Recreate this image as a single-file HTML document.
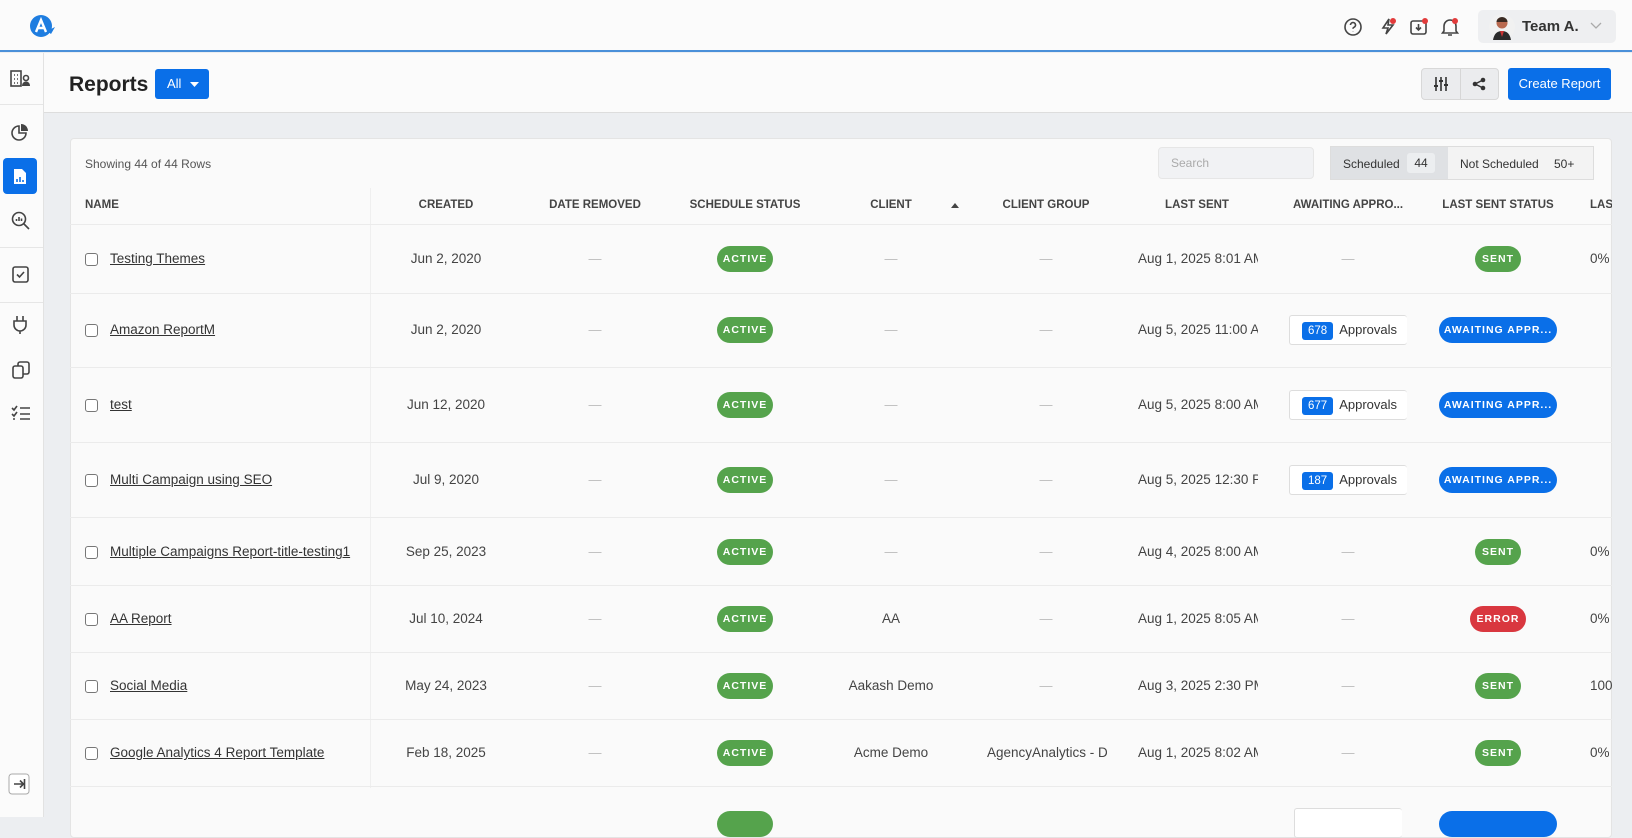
<!DOCTYPE html>
<html><head><meta charset="utf-8">
<style>
*{box-sizing:border-box;margin:0;padding:0}
body{width:1632px;height:817px;overflow:hidden;background:#eceef1;font-family:"Liberation Sans",Arial,sans-serif;color:#333;position:relative}
.a{position:absolute}
.top{left:0;top:0;width:1632px;height:52px;background:#fbfbfb;border-bottom:2px solid #4a90d9}
.side{left:0;top:53px;width:44px;height:764px;background:#fbfbfb;border-right:1px solid #e2e2e2}
.ph{left:44px;top:53px;width:1588px;height:60px;background:#fbfbfb;border-bottom:1px solid #ddd}
.card{left:70px;top:138px;width:1542px;height:700px;background:#fafafa;border:1px solid #e4e4e4;border-radius:4px;overflow:hidden}
.hd{font-size:11.5px;font-weight:bold;color:#444;top:199px;white-space:nowrap}
.c{transform:translateX(-50%);white-space:nowrap}
.t{font-size:13.5px;color:#444;white-space:nowrap}
.pill{height:26px;border-radius:13px;color:#fff;font-size:10.5px;font-weight:bold;letter-spacing:1px;text-align:center;line-height:26px}
.g{background:#55a34c}
.r{background:#d9373f}
.b{background:#0a6fe8}
.dash{color:#bbb;font-size:13px}
.line{left:70px;width:1542px;height:1px;background:#ebebeb}
.cb{width:13px;height:13px;border:1px solid #777;border-radius:3px;background:#fff}
.nm{font-size:13.5px;color:#333;text-decoration:underline}
.ic{stroke:#444;fill:none;stroke-width:1.6}
.ap{width:118px;height:30px;border:1px solid #ddd;border-right:none;border-radius:3px;background:#fff;font-size:13px;color:#333;line-height:28px;padding-left:12px}
.ap span{display:inline-block;background:#0a6fe8;color:#fff;font-size:11.5px;padding:0 6px;line-height:18px;border-radius:3px;margin-right:6px}
</style></head><body>
<div class="a top"></div>
<!-- logo -->
<svg class="a" style="left:29px;top:13px" width="28" height="26" viewBox="0 0 28 26"><circle cx="12" cy="13" r="11" fill="#1e7de0"/><path d="M7 19 L12 7 L17 19 M9 15 H15" stroke="#fff" stroke-width="2.4" fill="none"/><path d="M18 18 L26 14 L22 21 Z" fill="#1e7de0"/></svg>
<!-- top icons -->
<svg class="a" style="left:1343px;top:17px" width="20" height="20" viewBox="0 0 20 20"><circle cx="10" cy="10" r="8" class="ic"/><path d="M7.5 8a2.5 2.5 0 1 1 3.5 2.3c-.7.3-1 .8-1 1.5M10 14.5v.3" class="ic"/></svg>
<svg class="a" style="left:1378px;top:16px" width="20" height="20" viewBox="0 0 20 20"><path d="M11 3 L5 12 H10 L8 18 L15 9 H10 Z" class="ic"/><circle cx="15" cy="5" r="3" fill="#e23b3b"/></svg>
<svg class="a" style="left:1408px;top:16px" width="22" height="22" viewBox="0 0 22 22"><rect x="3" y="5" width="15" height="13" rx="2" class="ic"/><path d="M10.5 8v6M8 11.5l2.5 2.5 2.5-2.5" class="ic"/><circle cx="17" cy="5" r="3" fill="#e23b3b"/></svg>
<svg class="a" style="left:1440px;top:16px" width="20" height="22" viewBox="0 0 20 22"><path d="M4 15V10a6 6 0 0 1 12 0v5l1.5 2h-15z M8 19h4" class="ic"/><circle cx="15" cy="5" r="3" fill="#e23b3b"/></svg>
<div class="a" style="left:1478px;top:10px;width:138px;height:33px;background:#eeeff1;border-radius:5px"></div>
<svg class="a" style="left:1489px;top:13px" width="26" height="28" viewBox="0 0 26 28"><circle cx="13" cy="14" r="13" fill="#f1f1f1"/><circle cx="13" cy="10" r="5.5" fill="#b8694f"/><path d="M7.5 9a5.5 5 0 0 1 11 0z" fill="#3a2a22"/><path d="M4 27c1-6 4-9 9-9s8 3 9 9z" fill="#2b2b2b"/><path d="M11 18l2 6 2-6z" fill="#c33"/></svg>
<div class="a" style="left:1522px;top:18px;font-size:15px;font-weight:bold;color:#333">Team A.</div>
<svg class="a" style="left:1590px;top:22px" width="12" height="8" viewBox="0 0 12 8"><path d="M1 1l5 5 5-5" stroke="#aaa" fill="none" stroke-width="1.3"/></svg>

<div class="a side"></div>
<div class="a" style="left:0;top:104px;width:43px;height:1px;background:#e6e6e6"></div>
<div class="a" style="left:0;top:247px;width:43px;height:1px;background:#e6e6e6"></div>
<div class="a" style="left:0;top:302px;width:43px;height:1px;background:#e6e6e6"></div>
<svg class="a" style="left:10px;top:70px" width="22" height="18" viewBox="0 0 22 18"><rect x="1" y="1" width="10" height="15" class="ic"/><path d="M4 5h1M7 5h1M4 9h1M7 9h1M4 13h1M7 13h1" class="ic"/><circle cx="16" cy="8" r="2.5" class="ic"/><path d="M12 16c0-3 2-4.5 4-4.5s4 1.5 4 4.5z" fill="#444"/></svg>
<svg class="a" style="left:11px;top:123px" width="18" height="18" viewBox="0 0 18 18"><path d="M8 3a7 7 0 1 0 7 7H8z" class="ic"/><path d="M10 1v7h7a7 7 0 0 0-7-7z" fill="#444"/></svg>
<div class="a" style="left:3px;top:158px;width:34px;height:36px;background:#0a6fe8;border-radius:4px"></div>
<svg class="a" style="left:13px;top:168px" width="14" height="17" viewBox="0 0 14 17"><path d="M1 1h8l4 4v11H1z" fill="#fff"/><path d="M4 14v-3M7 14V9M10 14v-2" stroke="#0a6fe8" stroke-width="1.6"/></svg>
<svg class="a" style="left:11px;top:211px" width="20" height="20" viewBox="0 0 20 20"><circle cx="8" cy="8" r="6.5" class="ic"/><path d="M13 13l5 5" class="ic" stroke-width="2"/><path d="M5.5 10V8M8 10V6M10.5 10V7.5" class="ic"/></svg>
<svg class="a" style="left:12px;top:266px" width="17" height="17" viewBox="0 0 17 17"><rect x="1" y="1" width="15" height="15" rx="2" class="ic"/><path d="M5 8.5l2.5 2.5 4.5-5" class="ic"/></svg>
<svg class="a" style="left:12px;top:315px" width="16" height="20" viewBox="0 0 16 20"><path d="M5 1v5M11 1v5M2 6h12v4a6 6 0 0 1-12 0zM8 16v3" class="ic"/></svg>
<svg class="a" style="left:12px;top:361px" width="18" height="18" viewBox="0 0 18 18"><rect x="1" y="5" width="10" height="12" rx="2" class="ic"/><path d="M6 5V3a2 2 0 0 1 2-2h7a2 2 0 0 1 2 2v8a2 2 0 0 1-2 2h-4" class="ic"/></svg>
<svg class="a" style="left:11px;top:405px" width="20" height="16" viewBox="0 0 20 16"><path d="M1 3l2 2 3-4M1 9l2 2 3-4M2 14h2M9 3h10M9 9h10M9 14h10" class="ic"/></svg>
<svg class="a" style="left:8px;top:773px" width="22" height="22" viewBox="0 0 22 22"><rect x="1" y="1" width="20" height="20" rx="3" stroke="#aaa" fill="#fff"/><path d="M6 11h9M12 7.5l3.5 3.5-3.5 3.5M16.5 6v10" class="ic" stroke-width="1.4"/></svg>

<div class="a ph"></div>
<div class="a" style="left:69px;top:73px;font-size:21px;font-weight:bold;color:#222">Reports</div>
<div class="a" style="left:155px;top:69px;width:54px;height:30px;background:#0a6fe8;border-radius:3px;color:#fff;font-size:13px;line-height:30px;padding-left:12px">All<svg style="position:absolute;left:35px;top:13px" width="9" height="5" viewBox="0 0 9 5"><path d="M0 0h9L4.5 5z" fill="#fff"/></svg></div>
<div class="a" style="left:1421px;top:68px;width:78px;height:32px;background:#ebecee;border:1px solid #d8d8d8;border-radius:4px"></div>
<div class="a" style="left:1460px;top:69px;width:1px;height:30px;background:#d6d6d6"></div>
<svg class="a" style="left:1433px;top:76px" width="16" height="16" viewBox="0 0 16 16"><path d="M3 1v14M8 1v14M13 1v14" stroke="#333" stroke-width="1.6"/><path d="M1 10h4M6 5h4M11 9h4" stroke="#333" stroke-width="2"/></svg>
<svg class="a" style="left:1472px;top:77px" width="14" height="14" viewBox="0 0 14 14"><circle cx="3" cy="7" r="2.3" fill="#333"/><circle cx="11" cy="3" r="2.3" fill="#333"/><circle cx="11" cy="11" r="2.3" fill="#333"/><path d="M3 7l8-4M3 7l8 4" stroke="#333" stroke-width="1.4"/></svg>
<div class="a" style="left:1508px;top:68px;width:103px;height:32px;background:#0a6fe8;border-radius:3px;color:#fff;font-size:13px;line-height:32px;text-align:center">Create Report</div>

<div class="a card"></div>
<div class="a" style="left:85px;top:157px;font-size:12px;color:#555">Showing 44 of 44 Rows</div>
<div class="a" style="left:1158px;top:147px;width:156px;height:32px;background:#f1f2f4;border:1px solid #e6e6e6;border-radius:4px;font-size:12px;color:#aaa;line-height:30px;padding-left:12px">Search</div>
<div class="a" style="left:1330px;top:146px;width:264px;height:34px;background:#f3f3f3;border:1px solid #ddd"></div>
<div class="a" style="left:1331px;top:147px;width:117px;height:32px;background:#dfe1e4"></div>
<div class="a" style="left:1343px;top:157px;font-size:12px;color:#333">Scheduled</div>
<div class="a" style="left:1407px;top:153px;width:28px;height:20px;background:#eceef0;border-radius:3px;font-size:12px;line-height:20px;text-align:center">44</div>
<div class="a" style="left:1460px;top:157px;font-size:12px;color:#333">Not Scheduled</div>
<div class="a" style="left:1554px;top:157px;font-size:12px;color:#333">50+</div>

<div class="a" style="left:370px;top:188px;width:1px;height:600px;background:#efefef"></div>
<div class="a hd" style="left:85px">NAME</div>
<div class="a hd c" style="left:446px">CREATED</div>
<div class="a hd c" style="left:595px">DATE REMOVED</div>
<div class="a hd c" style="left:745px">SCHEDULE STATUS</div>
<div class="a hd c" style="left:891px">CLIENT</div>
<svg class="a" style="left:951px;top:203px" width="8" height="5" viewBox="0 0 8 5"><path d="M0 5h8L4 0z" fill="#444"/></svg>
<div class="a hd c" style="left:1046px">CLIENT GROUP</div>
<div class="a hd c" style="left:1197px">LAST SENT</div>
<div class="a hd c" style="left:1348px">AWAITING APPRO...</div>
<div class="a hd c" style="left:1498px">LAST SENT STATUS</div>
<div class="a hd" style="left:1590px;width:22px;overflow:hidden">LAST</div>

<div class="a line" style="top:224px"></div>
<div class="a line" style="top:293px"></div>
<div class="a line" style="top:367px"></div>
<div class="a line" style="top:442px"></div>
<div class="a line" style="top:517px"></div>
<div class="a line" style="top:585px"></div>
<div class="a line" style="top:652px"></div>
<div class="a line" style="top:719px"></div>
<div class="a line" style="top:786px"></div>

<!-- rows -->
<div id="rows"></div>
<div class="a cb" style="left:85px;top:253px"></div><div class="a nm" style="left:110px;top:251px">Testing Themes</div>
<div class="a t c" style="left:446px;top:251px">Jun 2, 2020</div>
<div class="a dash c" style="left:595px;top:251px">—</div>
<div class="a pill g" style="left:717px;top:246px;width:56px">ACTIVE</div>
<div class="a dash c" style="left:891px;top:251px">—</div>
<div class="a dash c" style="left:1046px;top:251px">—</div>
<div class="a t" style="left:1138px;top:251px;width:120px;overflow:hidden">Aug 1, 2025 8:01 AM</div>
<div class="a dash c" style="left:1348px;top:251px">—</div>
<div class="a pill g" style="left:1475px;top:246px;width:46px">SENT</div>
<div class="a t" style="left:1590px;top:251px;width:22px;overflow:hidden">0%</div>

<div class="a cb" style="left:85px;top:324px"></div><div class="a nm" style="left:110px;top:322px">Amazon ReportM</div>
<div class="a t c" style="left:446px;top:322px">Jun 2, 2020</div>
<div class="a dash c" style="left:595px;top:322px">—</div>
<div class="a pill g" style="left:717px;top:317px;width:56px">ACTIVE</div>
<div class="a dash c" style="left:891px;top:322px">—</div>
<div class="a dash c" style="left:1046px;top:322px">—</div>
<div class="a t" style="left:1138px;top:322px;width:120px;overflow:hidden">Aug 5, 2025 11:00 AM</div>
<div class="a ap" style="left:1289px;top:315px"><span>678</span>Approvals</div>
<div class="a pill b" style="left:1439px;top:317px;width:118px">AWAITING APPR...</div>

<div class="a cb" style="left:85px;top:399px"></div><div class="a nm" style="left:110px;top:397px">test</div>
<div class="a t c" style="left:446px;top:397px">Jun 12, 2020</div>
<div class="a dash c" style="left:595px;top:397px">—</div>
<div class="a pill g" style="left:717px;top:392px;width:56px">ACTIVE</div>
<div class="a dash c" style="left:891px;top:397px">—</div>
<div class="a dash c" style="left:1046px;top:397px">—</div>
<div class="a t" style="left:1138px;top:397px;width:120px;overflow:hidden">Aug 5, 2025 8:00 AM</div>
<div class="a ap" style="left:1289px;top:390px"><span>677</span>Approvals</div>
<div class="a pill b" style="left:1439px;top:392px;width:118px">AWAITING APPR...</div>

<div class="a cb" style="left:85px;top:474px"></div><div class="a nm" style="left:110px;top:472px">Multi Campaign using SEO</div>
<div class="a t c" style="left:446px;top:472px">Jul 9, 2020</div>
<div class="a dash c" style="left:595px;top:472px">—</div>
<div class="a pill g" style="left:717px;top:467px;width:56px">ACTIVE</div>
<div class="a dash c" style="left:891px;top:472px">—</div>
<div class="a dash c" style="left:1046px;top:472px">—</div>
<div class="a t" style="left:1138px;top:472px;width:120px;overflow:hidden">Aug 5, 2025 12:30 PM</div>
<div class="a ap" style="left:1289px;top:465px"><span>187</span>Approvals</div>
<div class="a pill b" style="left:1439px;top:467px;width:118px">AWAITING APPR...</div>

<div class="a cb" style="left:85px;top:546px"></div><div class="a nm" style="left:110px;top:544px">Multiple Campaigns Report-title-testing1</div>
<div class="a t c" style="left:446px;top:544px">Sep 25, 2023</div>
<div class="a dash c" style="left:595px;top:544px">—</div>
<div class="a pill g" style="left:717px;top:539px;width:56px">ACTIVE</div>
<div class="a dash c" style="left:891px;top:544px">—</div>
<div class="a dash c" style="left:1046px;top:544px">—</div>
<div class="a t" style="left:1138px;top:544px;width:120px;overflow:hidden">Aug 4, 2025 8:00 AM</div>
<div class="a dash c" style="left:1348px;top:544px">—</div>
<div class="a pill g" style="left:1475px;top:539px;width:46px">SENT</div>
<div class="a t" style="left:1590px;top:544px;width:22px;overflow:hidden">0%</div>

<div class="a cb" style="left:85px;top:613px"></div><div class="a nm" style="left:110px;top:611px">AA Report</div>
<div class="a t c" style="left:446px;top:611px">Jul 10, 2024</div>
<div class="a dash c" style="left:595px;top:611px">—</div>
<div class="a pill g" style="left:717px;top:606px;width:56px">ACTIVE</div>
<div class="a t c" style="left:891px;top:611px">AA</div>
<div class="a dash c" style="left:1046px;top:611px">—</div>
<div class="a t" style="left:1138px;top:611px;width:120px;overflow:hidden">Aug 1, 2025 8:05 AM</div>
<div class="a dash c" style="left:1348px;top:611px">—</div>
<div class="a pill r" style="left:1470px;top:606px;width:56px">ERROR</div>
<div class="a t" style="left:1590px;top:611px;width:22px;overflow:hidden">0%</div>

<div class="a cb" style="left:85px;top:680px"></div><div class="a nm" style="left:110px;top:678px">Social Media</div>
<div class="a t c" style="left:446px;top:678px">May 24, 2023</div>
<div class="a dash c" style="left:595px;top:678px">—</div>
<div class="a pill g" style="left:717px;top:673px;width:56px">ACTIVE</div>
<div class="a t c" style="left:891px;top:678px">Aakash Demo</div>
<div class="a dash c" style="left:1046px;top:678px">—</div>
<div class="a t" style="left:1138px;top:678px;width:120px;overflow:hidden">Aug 3, 2025 2:30 PM</div>
<div class="a dash c" style="left:1348px;top:678px">—</div>
<div class="a pill g" style="left:1475px;top:673px;width:46px">SENT</div>
<div class="a t" style="left:1590px;top:678px;width:22px;overflow:hidden">100%</div>

<div class="a cb" style="left:85px;top:747px"></div><div class="a nm" style="left:110px;top:745px">Google Analytics 4 Report Template</div>
<div class="a t c" style="left:446px;top:745px">Feb 18, 2025</div>
<div class="a dash c" style="left:595px;top:745px">—</div>
<div class="a pill g" style="left:717px;top:740px;width:56px">ACTIVE</div>
<div class="a t c" style="left:891px;top:745px">Acme Demo</div>
<div class="a t" style="left:987px;top:745px;width:120px;overflow:hidden">AgencyAnalytics - Demo</div>
<div class="a t" style="left:1138px;top:745px;width:120px;overflow:hidden">Aug 1, 2025 8:02 AM</div>
<div class="a dash c" style="left:1348px;top:745px">—</div>
<div class="a pill g" style="left:1475px;top:740px;width:46px">SENT</div>
<div class="a t" style="left:1590px;top:745px;width:22px;overflow:hidden">0%</div>

<div class="a pill g" style="left:717px;top:811px;width:56px"></div>
<div class="a ap" style="left:1294px;top:808px;width:108px"></div>
<div class="a pill b" style="left:1439px;top:811px;width:118px"></div>
</body></html>
